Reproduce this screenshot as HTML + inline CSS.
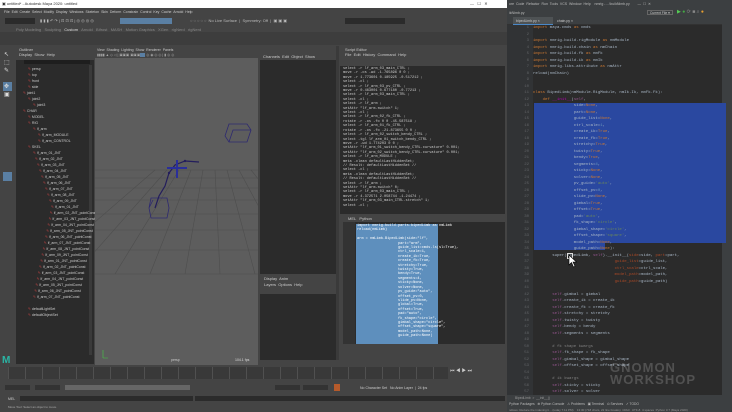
<!DOCTYPE html>
<html><head><meta charset="utf-8">
<style>
*{margin:0;padding:0;box-sizing:border-box}
body{width:732px;height:412px;overflow:hidden;background:#444;font-family:"Liberation Sans",sans-serif;position:relative}
.a{position:absolute}
.t{position:absolute;white-space:pre;font-size:4px;line-height:4px;color:#ccc}
.code div{position:absolute;white-space:pre;font-family:"Liberation Mono",monospace;font-size:4px;line-height:6.5px;color:#a9b7c6}
.k{color:#cc7832}.s{color:#6a8759}.n{color:#6897bb}.p{color:#aa4926}.sf{color:#94558d}
.ln{position:absolute;left:507px;width:22px;text-align:right;font-family:"Liberation Mono",monospace;font-size:4px;color:#606366}
.hist div{font-family:"Liberation Mono",monospace;font-size:3.6px;line-height:4.4px;color:#ccc;white-space:pre}
.ol div{position:absolute;font-size:3.5px;color:#ccc;white-space:pre}
</style></head><body>
<div class="a" style="left:0;top:0;width:507px;height:8px;background:#fff"></div>
<div class="t" style="left:2px;top:2px;color:#333">▣ untitled* - Autodesk Maya 2020: untitled</div>
<div class="t" style="left:470px;top:2px;color:#333">—&nbsp;&nbsp;&nbsp;☐&nbsp;&nbsp;&nbsp;✕</div>
<div class="a" style="left:0;top:8px;width:507px;height:37px;background:#444"></div>
<div class="t" style="left:4px;top:10px;font-size:3.5px">File  Edit  Create  Select  Modify  Display  Windows  Skeleton  Skin  Deform  Constrain  Control  Key  Cache  Arnold  Help</div>
<div class="a" style="left:5px;top:18px;width:30px;height:6px;background:#2b2b2b"></div>
<div class="a" style="left:120px;top:18px;width:52px;height:6px;background:#5a7fa3"></div>
<div class="t" style="left:40px;top:19px;color:#bbb">▮ ▮ ▮ ↶ ↷ | ⊡ ⊡ ⊡ | ◎ ◎ ◎ ◎</div>
<div class="t" style="left:190px;top:19px;color:#bbb">◌ ◌ ◌ ◌ ◌  No Live Surface  |  Symmetry: Off  |  ▣ ▣ ▣</div>
<div class="a" style="left:345px;top:18px;width:60px;height:6px;background:#2b2b2b"></div>
<div class="t" style="left:16px;top:28px;color:#888">Poly Modeling   Sculpting   <span style="color:#ddd">Custom</span>   Arnold   Bifrost   MASH   Motion Graphics   XGen   rigNerd   rigNerd</div>
<div class="a" style="left:0;top:32px;width:507px;height:13px;background:#3d3d3d"></div>
<div class="a" style="left:0;top:45px;width:15px;height:320px;background:#444"></div>
<div class="a" style="left:3px;top:82px;width:9px;height:9px;background:#5a7fa3"></div>
<div class="a" style="left:3px;top:172px;width:9px;height:9px;background:#5a7fa3"></div>
<div class="t" style="left:4px;top:53px;font-size:6px;color:#ddd">↖<br><br>⬚<br><br>✎<br><br><br><br>✥<br><br>▣</div>
<div class="a" style="left:2px;top:355px;font-size:10px;font-weight:bold;color:#2ab5a5">M</div>
<div class="a" style="left:16px;top:46px;width:78px;height:318px;background:#2b2b2b"></div>
<div class="a" style="left:16px;top:46px;width:78px;height:14px;background:#444"></div>
<div class="t" style="left:19px;top:48px">Outliner</div>
<div class="t" style="left:19px;top:53px">Display  Show  Help</div>
<div class="a" style="left:24px;top:60px;width:66px;height:4px;background:#1e1e1e"></div>
<div class="a" style="left:89px;top:65px;width:3px;height:290px;background:#3a3a3a"></div>
<div class="ol" id="ol"></div>
<div class="a" style="left:95px;top:46px;width:163px;height:319px;background:#5d5d5d"></div>
<div class="a" style="left:95px;top:46px;width:163px;height:12px;background:#444"></div>
<div class="t" style="left:97px;top:48px;font-size:3.5px">View  Shading  Lighting  Show  Renderer  Panels</div>
<div class="t" style="left:97px;top:53px;font-size:3.5px;color:#aaa">▮▮▮▮ ▲ ◇ ◁ | ▣▣▣ ▣▣▣▣ | ◎ ◉ ◎ ◎ | ▮ ◎ ◎</div>
<div class="a" style="left:140px;top:53px;width:5px;height:4px;background:#5a7fa3"></div>
<svg class="a" style="left:95px;top:58px" width="163" height="307">
<g stroke="#4e4e4e" stroke-width="0.6" fill="none">
<path d="M0 112 L163 112 M0 120 L163 120 M0 130 L163 130 M0 142 L163 142 M0 156 L163 156 M0 172 L163 172 M0 192 L163 192 M0 216 L163 216"/>
<path d="M-60 216 L60 112 M-20 216 L72 112 M20 216 L84 112 M55 216 L96 112 M90 216 L108 112 M125 216 L120 112 M160 216 L132 112 M200 216 L144 112 M240 216 L156 112"/>
</g>
<g stroke="#2e2a70" stroke-width="0.8" fill="none">
<path d="M134 66 L152 66 L156 72 L152 84 L134 84 L130 78 Z M130 78 L134 66 M134 84 L138 72 L156 72"/>
<path d="M56 140 L72 140 L74 150 L72 160 L56 160 L54 150 Z M54 150 L58 142"/>
</g>
<g stroke="#231d5c" stroke-width="1.2" fill="none">
<path d="M60 150 L64 138 L70 128 L74 115 L80 107 L90 103 L104 104"/>
</g>
<path d="M72 110 L92 110 M82 102 L82 120" stroke="#2a2f9a" stroke-width="2"/>
<circle cx="74" cy="115" r="1.2" fill="#231d5c"/><circle cx="90" cy="103" r="1.2" fill="#231d5c"/>
<path d="M8 300 L8 292 M8 300 L13 300" stroke="#4c4" stroke-width="0.6"/>
<text x="76" y="303" font-size="3.5" fill="#ccc" font-family="Liberation Sans">persp</text>
<text x="140" y="303" font-size="3.5" fill="#ddd" font-family="Liberation Sans">104.1 fps</text>
</svg>
<div class="a" style="left:260px;top:46px;width:76px;height:228px;background:#2b2b2b"></div>
<div class="a" style="left:260px;top:46px;width:76px;height:14px;background:#444"></div>
<div class="t" style="left:263px;top:55px">Channels  Edit  Object  Show</div>
<div class="a" style="left:260px;top:274px;width:76px;height:14px;background:#444"></div>
<div class="t" style="left:264px;top:277px">Display  Anim</div>
<div class="t" style="left:264px;top:283px">Layers  Options  Help</div>
<div class="a" style="left:260px;top:294px;width:76px;height:66px;background:#2b2b2b"></div>
<div class="a" style="left:336px;top:46px;width:3px;height:314px;background:#3a3a3a"></div>
<div class="a" style="left:340px;top:46px;width:167px;height:14px;background:#444"></div>
<div class="t" style="left:345px;top:48px">Script Editor</div>
<div class="t" style="left:345px;top:53px">File  Edit  History  Command  Help</div>
<div class="a" style="left:340px;top:60px;width:167px;height:6px;background:#444"></div>
<div class="a" style="left:340px;top:66px;width:165px;height:148px;background:#2b2b2b;overflow:hidden">
<div class="hist" style="padding:1px 3px" id="hist"></div></div>
<div class="a" style="left:340px;top:214px;width:167px;height:8px;background:#444"></div>
<div class="t" style="left:348px;top:217px">MEL   Python</div>
<div class="a" style="left:343px;top:222px;width:162px;height:122px;background:#2b2b2b"></div>
<div class="a" style="left:356px;top:224px;width:82px;height:120px;background:#5e8fbd"></div>
<div class="a" style="left:343px;top:222px;width:12px;height:122px;background:#333"></div>
<div class="hist a" style="left:357px;top:224px" id="sei"></div>
<div class="a" style="left:0;top:365px;width:507px;height:47px;background:#444"></div>
<div class="a" style="left:8px;top:367px;width:440px;height:12px;background:#393939;background-image:repeating-linear-gradient(90deg,#666 0 0.6px,transparent 0.6px 17px)"></div>
<div class="a" style="left:450px;top:368px;width:55px;height:10px;color:#ccc;font-size:5px">⏮ ◀ ▶ ⏭</div>
<div class="a" style="left:5px;top:385px;width:25px;height:5px;background:#333"></div>
<div class="a" style="left:35px;top:385px;width:25px;height:5px;background:#333"></div>
<div class="a" style="left:65px;top:385px;width:125px;height:5px;background:#666"></div>
<div class="a" style="left:275px;top:385px;width:25px;height:5px;background:#333"></div>
<div class="a" style="left:303px;top:385px;width:25px;height:5px;background:#333"></div>
<div class="a" style="left:334px;top:384px;width:6px;height:7px;background:#b55a2b"></div>
<div class="t" style="left:360px;top:386px;font-size:3.5px">No Character Set   No Anim Layer  |  24 fps</div>
<div class="t" style="left:8px;top:397px;font-size:3.5px">MEL</div>
<div class="a" style="left:20px;top:396px;width:173px;height:5px;background:#2b2b2b"></div>
<div class="a" style="left:195px;top:396px;width:310px;height:5px;background:#2b2b2b"></div>
<div class="t" style="left:8px;top:405px;font-size:3px;color:#aaa">Move Tool: Select an object to move.</div>
<div class="a" style="left:507px;top:0;width:225px;height:412px;background:#3c3f41"></div>
<div class="t" style="left:509px;top:2px;font-size:3.5px;color:#bbb">ore  Code  Refactor  Run  Tools  VCS  Window  Help    nmrig - ...\build\limb.py        —  ☐  ✕</div>
<div class="t" style="left:509px;top:11px;font-size:3.5px;color:#bbb">ild\limb.py</div>
<div class="a" style="left:647px;top:10px;width:26px;height:5px;border:0.5px solid #666;color:#ccc;font-size:3.3px;padding-left:2px">Current File ▾</div>
<div class="t" style="left:677px;top:10px;font-size:5px;color:#5c5">▶ <span style="color:#4a4">●</span> <span style="color:#888">⟳ ■ ⌕</span> <span style="color:#e9a030">●</span></div>
<div class="a" style="left:507px;top:17px;width:225px;height:8px;background:#3c3f41;border-bottom:1px solid #323232"></div>
<div class="a" style="left:513px;top:17px;width:40px;height:8px;background:#4e5254;border-bottom:1px solid #4a88c7"></div>
<div class="t" style="left:516px;top:19px;font-size:3.5px">bipedLimb.py ×</div>
<div class="t" style="left:557px;top:19px;font-size:3.5px">chain.py ×</div>
<div class="a" style="left:507px;top:25px;width:215px;height:370px;background:#2b2b2b"></div>
<div class="a" style="left:507px;top:25px;width:26px;height:370px;background:#313335"></div>
<div class="a" style="left:722px;top:17px;width:10px;height:378px;background:#3c3f41"></div>
<div class="a" style="left:534px;top:103px;width:192px;height:140px;background:#2a48a0"></div>
<div class="a" style="left:534px;top:243px;width:71px;height:7px;background:#2a48a0"></div>
<div id="lns"></div>
<div class="code" id="code"></div>
<div class="a" style="left:567px;top:253px;width:6px;height:6px;border:0.7px solid #ddd"></div>
<svg class="a" style="left:568px;top:254px" width="10" height="14"><path d="M1 1 L1 11 L3.5 8.5 L5.5 13 L7 12.3 L5 8 L8.5 8 Z" fill="#fff" stroke="#000" stroke-width="0.6"/></svg>
<div class="a" style="left:507px;top:395px;width:225px;height:17px;background:#3c3f41"></div>
<div class="t" style="left:515px;top:396px;font-size:3.3px;color:#999">BipedLimb  &gt;  __init__()</div>
<div class="t" style="left:509px;top:402px;font-size:3.3px;color:#bbb">Python Packages   ⊕ Python Console   ⚠ Problems   ▣ Terminal   ⊙ Services   ✓ TODO</div>
<div class="t" style="left:509px;top:408px;font-size:3px;color:#999">ndices: Reduce the indexing ti... (today 7:11 PM)    13:30 (718 chars, 22 line breaks)  CRLF  UTF-8  4 spaces  Python 3.7 (Maya 2020)</div>
<div class="a" style="left:610px;top:362px;font-size:13px;letter-spacing:1px;color:rgba(255,255,255,0.18);line-height:12px;font-weight:bold">GNOMON<br>WORKSHOP</div>
<script>
var ol=document.getElementById('ol'),o='';
var items=[['persp',28,67],['top',28,73],['front',28,79],['side',28,85],['joint1',23,91],['joint2',28,97],['joint3',33,103],['CHAR',23,109],['MODEL',28,115],['RIG',28,121],['lf_arm',33,127],['lf_arm_MODULE',38,133],['lf_arm_CONTROL',38,139],['SKEL',28,145]];
for(var i=0;i<25;i++)items.push(['lf_arm_0'+(i%9+1)+'_JNT'+(i>9?'_pointConst':''),33+Math.min(i,9)*2-Math.max(0,i-9)*1.2,151+i*6]);
items.push(['defaultLightSet',28,307],['defaultObjectSet',28,313]);
items.forEach(function(a){o+='<div style="left:'+a[1]+'px;top:'+a[2]+'px"><span style="color:#c44">✎</span> '+a[0]+'</div>'});
ol.innerHTML=o;
var h='',hl=['select -r lf_arm_03_main_CTRL ;','move -r -os -wd -1.765896 0 0 ;','move -r 1.773601 0.185925 -0.517212 ;','select -cl ;','select -r lf_arm_03_pv_CTRL ;','move -r 0.463001 0.677180 -0.77213 ;','select -r lf_arm_03_main_CTRL ;','select -cl ;','select -r lf_arm ;','setAttr "lf_arm.switch" 1;','select -cl ;','select -r lf_arm_02_fk_CTRL ;','rotate -r -os -fo 0 0 -45.587518 ;','select -r lf_arm_01_fk_CTRL ;','rotate -r -os -fo -21.873655 0 0 ;','select -r lf_arm_02_switch_bendy_CTRL ;','select -tgl lf_arm_01_switch_bendy_CTRL ;','move -r -wd 1.774203 0 0 ;','setAttr "lf_arm_01_switch_bendy_CTRL.curvature" 0.001;','setAttr "lf_arm_02_switch_bendy_CTRL.curvature" 0.001;','select -r lf_arm_MODULE ;','meta -clean defaultLastHiddenSet;','// Result: defaultLastHiddenSet //','select -cl ;','meta -clean defaultLastHiddenSet;','// Result: defaultLastHiddenSet //','select -r lf_arm ;','setAttr "lf_arm.switch" 0;','select -r lf_arm_03_main_CTRL ;','move -r 4.372571 2.058744 -1.24474 ;','setAttr "lf_arm_03_main_CTRL.stretch" 1;','select -cl ;'];
hl.forEach(function(l){h+='<div>'+l+'</div>'});document.getElementById('hist').innerHTML=h;
var se=['import nmrig.build.parts.bipedLimb as nmLimb','reload(nmLimb)','','arm = nmLimb.BipedLimb(side="lf",','                   part="arm",','                   guide_list=cmds.ls(sl=True),','                   ctrl_scale=1,','                   create_ik=True,','                   create_fk=True,','                   stretchy=True,','                   twisty=True,','                   bendy=True,','                   segments=4,','                   sticky=None,','                   solver=None,','                   pv_guide="auto",','                   offset_pv=0,','                   slide_pv=None,','                   global=True,','                   offset=True,','                   pad="auto",','                   fk_shape="circle",','                   gimbal_shape="circle",','                   offset_shape="square",','                   model_path=None,','                   guide_path=None)'];
var s='';se.forEach(function(l){s+='<div style="color:#fff;line-height:4.4px">'+(l||'&nbsp;')+'</div>'});document.getElementById('sei').innerHTML=s;
var K=function(x){return '<span class="k">'+x+'</span>'},S=function(x){return '<span class="s">'+x+'</span>'},N=function(x){return '<span class="n">'+x+'</span>'},P=function(x){return '<span class="p">'+x+'</span>'},F=function(x){return '<span class="sf">'+x+'</span>'};
var I='        ',J='                 ';
var lines=[K('import')+' maya.cmds '+K('as')+' cmds','',K('import')+' nmrig.build.rigModule '+K('as')+' nmModule',K('import')+' nmrig.build.chain '+K('as')+' nmChain',K('import')+' nmrig.build.fk '+K('as')+' nmFk',K('import')+' nmrig.build.ik '+K('as')+' nmIk',K('import')+' nmrig.libs.attribute '+K('as')+' nmAttr','reload(nmChain)','','',
K('class')+' BipedLimb(nmModule.RigModule, nmIk.Ik, nmFk.Fk):','    '+K('def')+' <span style="color:#b200b2">__init__</span>('+F('self')+',',
J+'side='+K('None')+',',J+'part='+K('None')+',',J+'guide_list='+K('None')+',',J+'ctrl_scale='+N('1')+',',J+'create_ik='+K('True')+',',J+'create_fk='+K('True')+',',J+'stretchy='+K('True')+',',J+'twisty='+K('True')+',',J+'bendy='+K('True')+',',J+'segments='+N('4')+',',J+'sticky='+K('None')+',',J+'solver='+K('None')+',',J+'pv_guide='+S("'auto'")+',',J+'offset_pv='+N('0')+',',J+'slide_pv='+K('None')+',',J+'gimbal='+K('True')+',',J+'offset='+K('True')+',',J+'pad='+S("'auto'")+',',J+'fk_shape='+S("'circle'")+',',J+'gimbal_shape='+S("'circle'")+',',J+'offset_shape='+S("'square'")+',',J+'model_path='+K('None')+',',J+'guide_path='+K('None')+'):',
I+'super(BipedLimb, '+F('self')+').__init__('+P('side')+'=side, '+P('part')+'=part,',J+'                 '+P('guide_list')+'=guide_list,',J+'                 '+P('ctrl_scale')+'=ctrl_scale,',J+'                 '+P('model_path')+'=model_path,',J+'                 '+P('guide_path')+'=guide_path)','',
I+F('self')+'.gimbal = gimbal',I+F('self')+'.create_ik = create_ik',I+F('self')+'.create_fk = create_fk',I+F('self')+'.stretchy = stretchy',I+F('self')+'.twisty = twisty',I+F('self')+'.bendy = bendy',I+F('self')+'.segments = segments','',
I+'<span style="color:#808080"># fk shape kwargs</span>',I+F('self')+'.fk_shape = fk_shape',I+F('self')+'.gimbal_shape = gimbal_shape',I+F('self')+'.offset_shape = offset_shape','',I+'<span style="color:#808080"># ik kwargs</span>',I+F('self')+'.sticky = sticky',I+F('self')+'.solver = solver'];
var c='',n='';lines.forEach(function(l,i){var y=25+i*6.5;c+='<div style="left:533px;top:'+y+'px">'+(l||' ')+'</div>';n+='<div class="ln" style="top:'+(y+1)+'px">'+(i+1)+'</div>'});
document.getElementById('code').innerHTML=c;document.getElementById('lns').innerHTML=n;
</script>
</body></html>
